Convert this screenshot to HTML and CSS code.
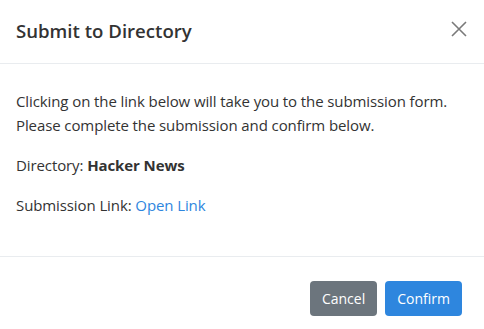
FILE: index.html
```html
<!DOCTYPE html>
<html lang="en">
<head>
<meta charset="utf-8">
<title>Submit to Directory</title>
<link rel="stylesheet" href="styles.css">
</head>
<body>
<div class="modal">
  <div class="modal-header">
    <h5 class="modal-title">Submit to Directory</h5>
    <button class="close" type="button" aria-label="Close">
      <svg width="16" height="16" viewBox="0 0 16 16"><path d="M1 1L15 15M15 1L1 15" stroke="#7a7a7a" stroke-width="1.6" fill="none"/></svg>
    </button>
  </div>
  <div class="modal-body">
    <p>Clicking on the link below will take you to the submission form. Please complete the submission and confirm below.</p>
    <p>Directory: <strong>Hacker News</strong></p>
    <p>Submission Link: <a href="#" class="link">Open Link</a></p>
  </div>
  <div class="modal-footer">
    <button class="btn btn-secondary" type="button">Cancel</button>
    <button class="btn btn-primary" type="button">Confirm</button>
  </div>
</div>
</body>
</html>
```
FILE: styles.css
```css
html, body {
  margin: 0;
  padding: 0;
  background: #fff;
}
body {
  font-family: "Open Sans", "Noto Sans", sans-serif;
  font-size: 15px;
  letter-spacing: -0.1px;
  line-height: 24px;
  color: #333;
}
.modal {
  width: 484px;
  background: #fff;
}
.modal-header {
  display: flex;
  align-items: center;
  justify-content: space-between;
  height: 64px;
  padding: 0 17px 2px 16px;
  box-sizing: border-box;
  border-bottom: 1px solid #e9ecef;
}
.modal-title {
  margin: 0;
  font-size: 18.6px;
  font-weight: 600;
  line-height: 30px;
  letter-spacing: 0;
  color: #333;
}
.close {
  border: 0;
  background: none;
  padding: 0;
  width: 16px;
  height: 16px;
  margin-top: -4px;
  display: flex;
}
.modal-body {
  padding: 25px 16px 23px;
}
.modal-body p {
  margin: 0 0 16px;
}
.modal-body strong {
  font-weight: 700;
}
.link {
  color: #2e86de;
  text-decoration: none;
}
.modal-footer {
  display: flex;
  justify-content: flex-end;
  gap: 8px;
  padding: 24px 22px 13px;
  border-top: 1px solid #e9ecef;
}
.btn {
  font-family: inherit;
  font-size: 14px;
  letter-spacing: 0;
  line-height: 21px;
  height: 35px;
  padding: 0 12px;
  border: 0;
  border-radius: 4px;
  color: #fff;
}
.btn-secondary {
  background: #6c757d;
}
.btn-primary {
  background: #2e86de;
}
```
